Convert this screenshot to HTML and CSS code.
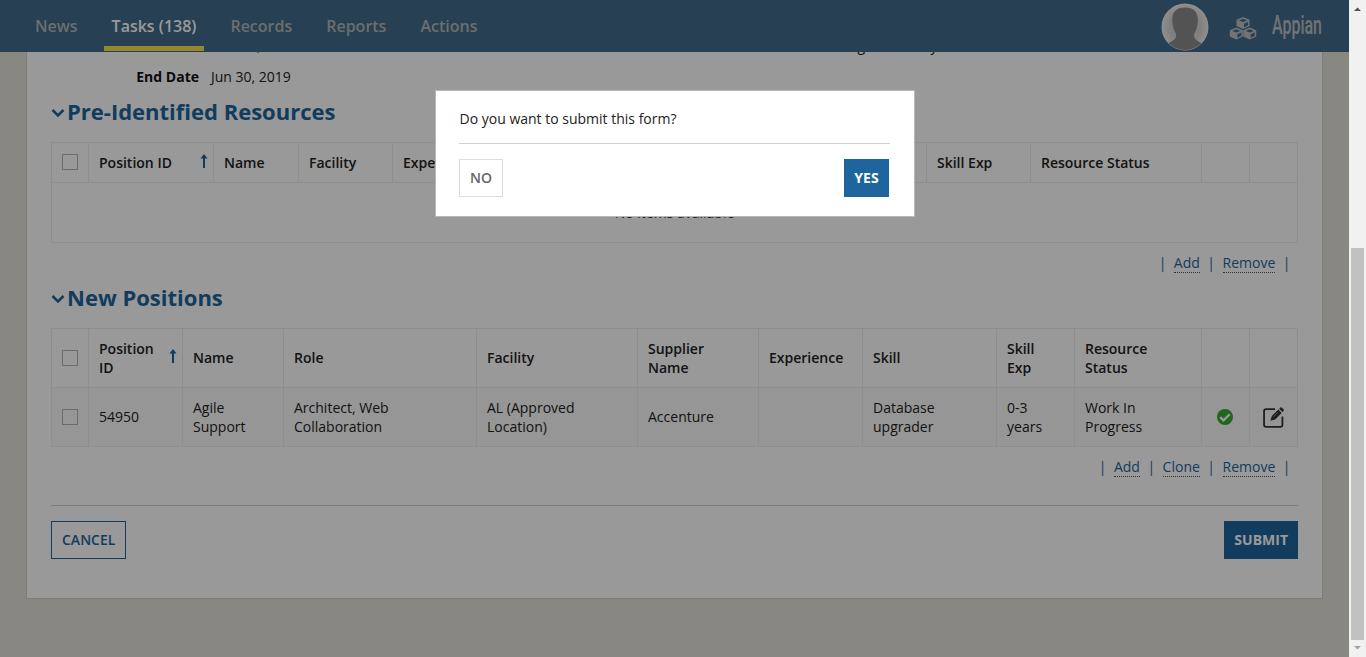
FILE: index.html
```html
<!DOCTYPE html>
<html lang="en">
<head>
<meta charset="utf-8">
<title>Tasks</title>
<link rel="stylesheet" href="styles.css">
</head>
<body>
<div class="window">
  <div class="page">
    <header class="nav">
      <nav class="tabs">
        <a class="tab">News</a>
        <a class="tab active">Tasks (138)</a>
        <a class="tab">Records</a>
        <a class="tab">Reports</a>
        <a class="tab">Actions</a>
      </nav>
      <div class="tools">
        <svg class="avatar" viewBox="0 0 48 48">
          <defs>
            <clipPath id="face"><circle cx="24" cy="24" r="23"/></clipPath>
            <radialGradient id="glow"><stop offset=".65" stop-color="#d4d4d4"/><stop offset="1" stop-color="#ececec"/></radialGradient>
          </defs>
          <circle cx="24" cy="24" r="23.500" fill="#f0f0f0"/>
          <g clip-path="url(#face)">
            <circle cx="24" cy="24" r="23" fill="url(#glow)"/>
            <path d="M24 4.500C15.500 4.500 11 9 11.300 17c.2 6 1.300 10 3.200 13 .8 2 .9 4-.6 6-1.500 2-5 3-8 5v8h36v-8c-3-2-6-3-7.700-5-1.500-2-1.400-4-.6-6 1.900-3 3-7 3.200-13C37 9 32.500 4.500 24 4.500Z" fill="#8a8a8a"/>
          </g>
        </svg>
        <svg class="cubes" viewBox="0 0 28 24">
          <g fill="#bcc0c3">
            <path d="M14 1l6.500 2.800V10L14 13 7.500 10V3.800Z"/>
            <path d="M7.300 11.500l6.500 2.800v6.200l-6.500 3-6.500-3v-6.200Z"/>
            <path d="M20.700 11.500l6.500 2.800v6.200l-6.500 3-6.500-3v-6.200Z"/>
          </g>
          <g fill="#436b8a">
            <path d="M14 2.800l4 1.600-4 1.700-4-1.700Z"/><path d="M15 7.700l4-1.700v3.300l-4 1.900Z"/>
            <path d="M7.300 13.300l4 1.600-4 1.700-4-1.700Z"/><path d="M8.300 18.200l4-1.700v3.300l-4 1.900Z"/>
            <path d="M20.700 13.300l4 1.600-4 1.700-4-1.700Z"/><path d="M21.700 18.200l4-1.700v3.300l-4 1.900Z"/>
          </g>
        </svg>
        <svg class="logo" viewBox="0 0 52 36"><text x="1" y="26" textLength="50" lengthAdjust="spacingAndGlyphs">Appian</text></svg>
      </div>
    </header>
    <main class="content">
      <section class="card">
        <div class="details">
          <div class="field"><span class="label">Start Date</span><span>Mar 01, 2019</span></div>
          <div class="field side"><span>Regional Entity</span></div>
        </div>
        <div class="details">
          <div class="field"><span class="label">End Date</span><span>Jun 30, 2019</span></div>
        </div>

        <h2><svg class="chev" viewBox="0 0 14 10"><path d="M1.500 2L7 7.500 12.500 2"/></svg>Pre-Identified Resources</h2>
        <table class="grid first">
          <colgroup><col class="w37"><col class="w125"><col class="w85"><col class="w94"><col class="w104"><col class="w430"><col class="w104"><col class="w171"><col class="w48"><col class="w48"></colgroup>
          <tr>
            <th><i class="box"></i></th>
            <th><div class="sort">Position ID<svg class="up" viewBox="0 0 8 14"><path d="M4 0L7.500 4.500H5V14H3V4.500H.5Z"/></svg></div></th>
            <th>Name</th><th>Facility</th><th>Experience</th><th>Skill</th><th>Skill Exp</th><th>Resource Status</th><th></th><th></th>
          </tr>
          <tr><td class="empty" colspan="10">No items available</td></tr>
        </table>
        <div class="links"><span>|</span><a>Add</a><span>|</span><a>Remove</a><span>|</span></div>

        <h2 class="second"><svg class="chev" viewBox="0 0 14 10"><path d="M1.500 2L7 7.500 12.500 2"/></svg>New Positions</h2>
        <table class="grid positions">
          <colgroup><col class="w37"><col class="w94"><col class="w101"><col class="w193"><col class="w161"><col class="w121"><col class="w104"><col class="w134"><col class="w78"><col class="w127"><col class="w48"><col class="w48"></colgroup>
          <tr>
            <th><i class="box"></i></th>
            <th><div class="sort"><span>Position<br>ID</span><svg class="up" viewBox="0 0 8 14"><path d="M4 0L7.500 4.500H5V14H3V4.500H.5Z"/></svg></div></th>
            <th>Name</th><th>Role</th><th>Facility</th><th>Supplier<br>Name</th><th>Experience</th><th>Skill</th><th>Skill<br>Exp</th><th>Resource<br>Status</th><th></th><th></th>
          </tr>
          <tr class="shade">
            <td><i class="box"></i></td>
            <td>54950</td><td>Agile<br>Support</td><td>Architect, Web<br>Collaboration</td><td>AL (Approved<br>Location)</td><td>Accenture</td><td></td><td>Database<br>upgrader</td><td>0-3<br>years</td><td>Work In<br>Progress</td>
            <td class="icon"><svg class="ok" viewBox="0 0 16 16"><circle cx="8" cy="8" r="8" fill="#36a836"/><path d="M3.200 8.200l3.300 3.200 6.200-6.200" fill="none" stroke="#fff" stroke-width="2.300"/></svg></td>
            <td class="icon"><svg class="edit" viewBox="0 0 20 20"><path d="M11.500 2H3Q1 2 1 4v13q0 2 2 2h13.500q2 0 2-2V9" fill="none" stroke="#333" stroke-width="1.700"/><path d="M7 13.200l1.400-4.600 6.200-6.200 3.200 3.200-6.200 6.200Z M15.400 1.600l1.200-1.200q.6-.5 1.200 0l1.900 1.900q.5.600 0 1.200l-1.200 1.200Z" fill="#333"/><path d="M9.600 9.600l4.700-4.700" stroke="#aaa" stroke-width=".7"/></svg></td>
          </tr>
        </table>
        <div class="links"><span>|</span><a>Add</a><span>|</span><a>Clone</a><span>|</span><a>Remove</a><span>|</span></div>
        <div class="footer"><button class="btn outline">CANCEL</button><button class="btn solid">SUBMIT</button></div>
      </section>
    </main>
    <div class="mask">
      <div class="dialog">
        <p class="question">Do you want to submit this form?</p>
        <div class="choices"><button class="btn plain">NO</button><button class="btn solid yes">YES</button></div>
      </div>
    </div>
  </div>
  <div class="scroll">
    <svg viewBox="0 0 17 17"><path d="M5 11L8.500 7.500 12 11Z" fill="#505050"/></svg>
    <div class="track"><div class="thumb"></div></div>
    <svg viewBox="0 0 17 17"><path d="M5 6L8.500 9.500 12 6Z" fill="#a3a3a3"/></svg>
  </div>
</div>
</body>
</html>
```
FILE: styles.css
```css
* { box-sizing: border-box; }
body { margin: 0; font: 14px/19px "Open Sans", sans-serif; color: #222; overflow: hidden; }
.window { display: flex; width: 1366px; height: 657px; }
.page { position: relative; display: flex; flex-direction: column; flex: 1; height: 657px; background: #e5e2d8; overflow: hidden; }

.nav { display: flex; justify-content: space-between; height: 52px; flex: none; background: #436b8a; }
.tabs { display: flex; padding-left: 27px; gap: 18px; }
.tab { height: 51px; padding: 0 8px; line-height: 52px; font-size: 16px; font-weight: 600; color: #b4b7b9; border-bottom: 5px solid transparent; }
.tab.active { color: #fff; border-bottom-color: #fae04b; }
.tools { display: flex; align-items: center; padding-right: 26px; }
.avatar { width: 48px; height: 48px; margin: 1px 20px 0 0; }
.cubes { width: 28px; height: 24px; margin: 4px 14px 0 0; }
.logo { width: 52px; height: 36px; }
.logo text { font: 500 25px Roboto, sans-serif; fill: #bcc0c3; }

.content { flex: 1; min-height: 0; padding: 0 26px 58px; overflow: hidden; }
.card { height: 547px; padding: 0 24px; background: #fff; border: 1px solid #cfcfcf; border-top: 0; overflow: hidden; }
.details { display: flex; height: 30px; }
.details:first-child { height: 31px; margin-top: -16px; }
.field { display: flex; gap: 12px; width: 790px; }
.field.side { width: auto; }
.label { width: 148px; text-align: right; font-weight: 700; color: #111; }

h2 { display: flex; align-items: center; height: 30px; font-size: 22px; line-height: 30px; font-weight: 700; color: #1d659c; }
.details + h2 { margin: -1px 0 16px; }
h2.second { margin: 8px 0 16px; }
.chev { width: 14px; height: 10px; margin: 3px 2px 0 0; }
.chev path { fill: none; stroke: #1d659c; stroke-width: 2.500; }

.grid { width: 1247px; table-layout: fixed; border-collapse: collapse; }
.grid th, .grid td { padding: 9px 10px 10px; border: 1px solid #ededed; text-align: left; vertical-align: middle; line-height: 19px; white-space: nowrap; }
.grid th { height: 40px; font-weight: 600; }
.positions th, .positions td { height: 59px; }
.grid .empty { height: 60px; text-align: center; color: #333; }
.shade { background: #fafafa; }
.w37 { width: 37px; } .w48 { width: 48px; } .w78 { width: 78px; } .w85 { width: 85px; }
.w94 { width: 94px; } .w101 { width: 101px; } .w104 { width: 104px; } .w121 { width: 121px; }
.w125 { width: 125px; } .w127 { width: 127px; } .w134 { width: 134px; } .w161 { width: 161px; }
.w171 { width: 171px; } .w193 { width: 193px; } .w430 { width: 430px; }
.box { display: block; width: 16px; height: 16px; border: 1px solid #b5b5b5; }
.sort { display: flex; justify-content: space-between; align-items: center; margin-right: -5px; }
.up { width: 8px; height: 14px; fill: #1d659c; margin-top: -3px; }
.grid td.icon { padding: 0 1px 0 0; }
.icon svg { display: block; margin: 0 auto; }
.ok { width: 16px; height: 16px; }
.edit { width: 21px; height: 21px; }

.links { display: flex; justify-content: flex-end; gap: 7.5px; height: 20px; margin: 11px 7.5px 0 0; color: #1d659c; }
.links a { height: 19px; line-height: 18px; border-bottom: 1px dotted #555; }
.links span { line-height: 18px; }
.footer { display: flex; justify-content: space-between; margin-top: 27px; padding-top: 15px; border-top: 1px solid #cfcfcf; }
.btn { height: 38px; padding: 0 10px; border: 1px solid; border-radius: 0; font: 600 14px/36px "Open Sans", sans-serif; }
.btn.solid { border: 0; background: #1d659c; color: #fff; font-weight: 700; }
.btn.outline { border-color: #1d659c; background: #fff; color: #1d659c; }
.btn.plain { border-color: #ddd; background: #fff; color: #666; }
.btn.yes { width: 45px; }

.mask { position: absolute; inset: 0; display: flex; justify-content: center; align-items: flex-start; padding: 90px 0 0 1px; background: rgba(0, 0, 0, .4); }
.dialog { width: 480px; height: 127px; padding: 18px 24px 0 23px; background: #fff; border: 1px solid #b8b8b8; }
.question { margin: 0; padding: 0 0 15px .5px; border-bottom: 1px solid #d2d2d2; }
.choices { display: flex; justify-content: space-between; padding: 15px 1px 0 0; }

.scroll { display: flex; flex-direction: column; width: 17px; background: #f1f1f1; }
.scroll svg { width: 17px; height: 17px; }
.track { display: flex; flex-direction: column; justify-content: flex-end; flex: 1; padding: 0 2px; }
.thumb { height: 392px; background: #c1c1c1; }
```
